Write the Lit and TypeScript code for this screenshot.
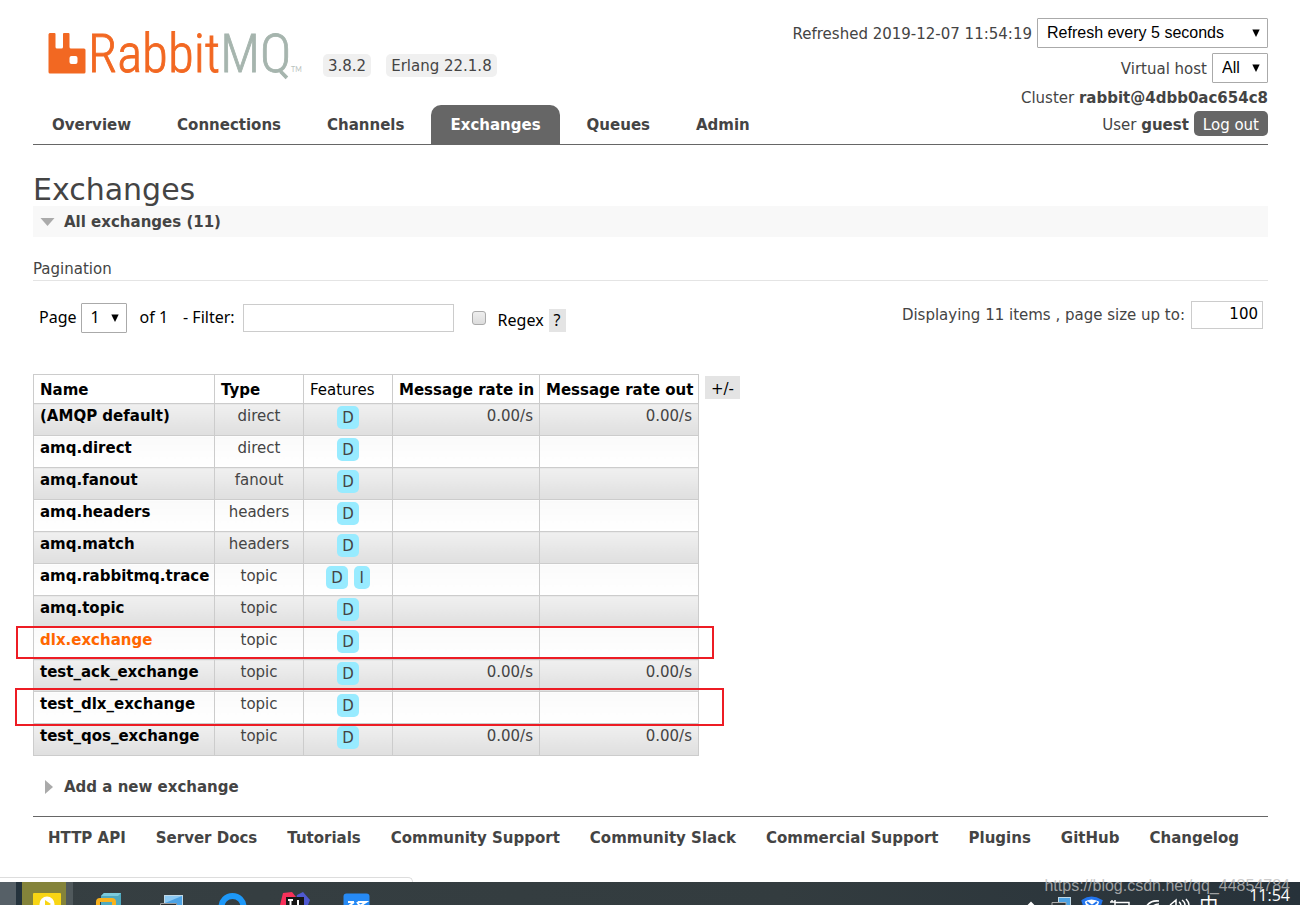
import { LitElement, html, css } from "lit";
import { customElement, property } from "lit/decorators.js";

interface Exchange {
  name: string;
  type: string;
  features: string[];
  rate?: string;
  hot?: boolean;
}

const exchanges: Exchange[] = [
  { name: "(AMQP default)", type: "direct", features: ["D"], rate: "0.00/s" },
  { name: "amq.direct", type: "direct", features: ["D"] },
  { name: "amq.fanout", type: "fanout", features: ["D"] },
  { name: "amq.headers", type: "headers", features: ["D"] },
  { name: "amq.match", type: "headers", features: ["D"] },
  { name: "amq.rabbitmq.trace", type: "topic", features: ["D", "I"] },
  { name: "amq.topic", type: "topic", features: ["D"] },
  { name: "dlx.exchange", type: "topic", features: ["D"], hot: true },
  { name: "test_ack_exchange", type: "topic", features: ["D"], rate: "0.00/s" },
  { name: "test_dlx_exchange", type: "topic", features: ["D"] },
  { name: "test_qos_exchange", type: "topic", features: ["D"], rate: "0.00/s" },
];

const tabs = ["Overview", "Connections", "Channels", "Exchanges", "Queues", "Admin"];

const footerLinks = [
  "HTTP API",
  "Server Docs",
  "Tutorials",
  "Community Support",
  "Community Slack",
  "Commercial Support",
  "Plugins",
  "GitHub",
  "Changelog",
];

const reset = css`
  * {
    box-sizing: border-box;
  }
  a {
    color: inherit;
    text-decoration: none;
  }
  button {
    font: inherit;
    border: 0;
    margin: 0;
    cursor: pointer;
  }
  .select {
    display: inline-flex;
    position: relative;
  }
  .select select {
    appearance: none;
    height: 30px;
    margin: 0;
    padding: 0 36px 2px 9px;
    border: 1px solid #aaa;
    border-radius: 1px;
    background: #fff;
    color: #000;
    font: 16px "Liberation Sans", Arial, sans-serif;
  }
  .select svg {
    position: absolute;
    right: 8px;
    top: 11px;
    pointer-events: none;
  }
`;

const arrow = html`<svg width="8" height="8" viewBox="0 0 8 8" aria-hidden="true">
  <path d="M0.3 0.5H7.7L4 8Z" fill="#000" />
</svg>`;

@customElement("app-header")
class AppHeader extends LitElement {
  static styles = [
    reset,
    css`
      :host {
        display: block;
      }
      .header {
        display: flex;
        justify-content: space-between;
        border-bottom: 1px solid #666;
      }
      .left {
        display: flex;
        flex-direction: column;
        justify-content: space-between;
      }
      .brand {
        display: flex;
        align-items: flex-end;
        padding: 23px 0 0 14px;
      }
      .logo {
        display: block;
        margin-right: 19px;
      }
      .logo svg {
        display: block;
        overflow: visible;
      }
      .version {
        height: 23px;
        padding: 0 5px;
        margin-right: 15px;
        border-radius: 5px;
        background: #f0f0f0;
        line-height: 25px;
      }
      .tabs {
        display: flex;
        gap: 8px;
        margin: 0;
        padding: 0;
        list-style: none;
        font-weight: bold;
      }
      .tab {
        display: block;
        height: 39px;
        padding: 0 19px;
        border-radius: 10px 10px 0 0;
        line-height: 40px;
      }
      .tab.on {
        background: #666;
        color: #fff;
      }
      .status {
        display: flex;
        flex-direction: column;
        align-items: flex-end;
        margin: 0;
        padding: 18px 0 8px;
        list-style: none;
        white-space: nowrap;
      }
      .row {
        display: flex;
        align-items: center;
        gap: 5px;
        height: 30px;
        margin-bottom: 5px;
      }
      .row label {
        padding-top: 2px;
      }
      .line {
        display: flex;
        align-items: center;
        gap: 5px;
        height: 18px;
        margin-bottom: 5px;
        line-height: 20px;
      }
      .line > span {
        padding-top: 2px;
      }
      .user {
        height: 25px;
        margin: 0;
      }
      .wide select {
        width: 231px;
      }
      .small select {
        width: 56px;
        padding-right: 20px;
      }
      .logout {
        height: 25px;
        padding: 2px 9px 0;
        border-radius: 5px;
        background: #666;
        color: #fff;
      }
    `,
  ];

  render() {
    return html`
      <header class="header">
        <div class="left">
          <div class="brand">
            <a href="#" class="logo" aria-label="RabbitMQ home">
              <svg width="257" height="54" viewBox="0 0 257 54">
                <path
                  fill="#f26822"
                  fill-rule="evenodd"
                  d="M2 10h5.500q1 0 1 1v13q0 1.500 1.500 1.500h4.500q1.500 0 1.500-1.500v-13q0-1 1-1h4.500q1 0 1 1v13q0 1.500 1.500 1.500h13q1.500 0 1.500 1.500v22q0 1.500-1.500 1.500h-34q-1.500 0-1.500-1.500v-37.500q0-1 1-1zM24.500 33q-2 0-2 2v4q0 2 2 2h4q2 0 2-2v-4q0-2-2-2z"
                />
                <text
                  x="41"
                  y="49"
                  font-family="'Liberation Sans Narrow', 'Roboto Condensed', Roboto, sans-serif"
                  font-size="53"
                  font-weight="300"
                  fill="#f26822"
                  stroke="#f26822"
                  stroke-width="0.8"
                >Rabbit<tspan fill="#a6b5ae" stroke="#a6b5ae">MQ</tspan></text>
                <text x="244" y="49" font-family="Lato, sans-serif" font-size="7" fill="#b8c2bd">TM</text>
              </svg>
            </a>
            <span class="version">3.8.2</span>
            <span class="version">Erlang 22.1.8</span>
          </div>
          <nav>
            <ul class="tabs">
              ${tabs.map(
                (t) => html`<li><a href="#" class="tab ${t === "Exchanges" ? "on" : ""}">${t}</a></li>`
              )}
            </ul>
          </nav>
        </div>
        <ul class="status">
          <li class="row">
            <label for="refresh">Refreshed 2019-12-07 11:54:19</label>
            <span class="select wide"><select id="refresh"><option>Refresh every 5 seconds</option></select>${arrow}</span>
          </li>
          <li class="row">
            <label for="vhost">Virtual host</label>
            <span class="select small"><select id="vhost"><option>All</option></select>${arrow}</span>
          </li>
          <li class="line"><span>Cluster <b>rabbit@4dbb0ac654c8</b></span></li>
          <li class="line user"><span>User <b>guest</b></span> <button class="logout">Log out</button></li>
        </ul>
      </header>
    `;
  }
}

@customElement("exchange-table")
class ExchangeTable extends LitElement {
  @property({ attribute: false }) rows: Exchange[] = [];

  static styles = [
    reset,
    css`
      :host {
        display: block;
      }
      .wrap {
        position: relative;
        display: flex;
        align-items: flex-start;
        gap: 6px;
      }
      .table {
        width: 666px;
        table-layout: fixed;
        border-collapse: collapse;
        line-height: 18px;
      }
      .c1 { width: 181px; }
      .c2 { width: 89px; }
      .c3 { width: 89px; }
      .c4 { width: 147px; }
      .c5 { width: 159px; }
      th,
      td {
        border: 1px solid #ccc;
        padding: 3px 6px;
        vertical-align: top;
        white-space: nowrap;
      }
      th {
        height: 29px;
        padding: 6px 6px 4px;
        text-align: left;
        color: #000;
      }
      th.plain {
        font-weight: normal;
      }
      td {
        height: 32px;
        text-align: center;
        background: linear-gradient(#fafafa, #fff);
      }
      tr:nth-child(odd) td {
        background: linear-gradient(#f0f0f0, #dfdfdf);
      }
      td.name {
        text-align: left;
        font-weight: bold;
        color: #000;
      }
      td.name.hot {
        color: #ff6600;
      }
      td.rate {
        text-align: right;
      }
      td.features {
        padding: 2px 0 0;
      }
      .chips {
        display: flex;
        justify-content: center;
        gap: 6px;
      }
      .chip {
        min-width: 16px;
        height: 23px;
        padding: 0 5px;
        border-radius: 5px;
        background: #98ebff;
        line-height: 24px;
      }
      .columns {
        height: 23px;
        margin-top: 2px;
        padding: 2px 6px 0;
        background: #e4e4e4;
        color: #000;
      }
      .mark {
        position: absolute;
        border: 2px solid #ed1c24;
        pointer-events: none;
      }
      .mark.first {
        left: -17px;
        top: 252px;
        width: 698px;
        height: 33px;
      }
      .mark.second {
        left: -18px;
        top: 314px;
        width: 709px;
        height: 38px;
      }
    `,
  ];

  render() {
    return html`
      <div class="wrap">
        <table class="table">
          <colgroup>
            <col class="c1" /><col class="c2" /><col class="c3" /><col class="c4" /><col class="c5" />
          </colgroup>
          <thead>
            <tr>
              <th>Name</th>
              <th>Type</th>
              <th class="plain">Features</th>
              <th>Message rate in</th>
              <th>Message rate out</th>
            </tr>
          </thead>
          <tbody>
            ${this.rows.map(
              (r) => html`<tr>
                <td class="name ${r.hot ? "hot" : ""}"><a href="#">${r.name}</a></td>
                <td>${r.type}</td>
                <td class="features">
                  <div class="chips">${r.features.map((f) => html`<span class="chip">${f}</span>`)}</div>
                </td>
                <td class="rate">${r.rate ?? ""}</td>
                <td class="rate">${r.rate ?? ""}</td>
              </tr>`
            )}
          </tbody>
        </table>
        <button class="columns">+/-</button>
        <div class="mark first"></div>
        <div class="mark second"></div>
      </div>
    `;
  }
}

@customElement("task-bar")
class TaskBar extends LitElement {
  static styles = css`
    :host {
      display: block;
    }
    .hint {
      width: 412px;
      height: 4px;
      border: 1px solid #ddd;
      border-width: 1px 1px 0 0;
      border-radius: 0 5px 0 0;
    }
    .bar {
      position: relative;
      display: flex;
      justify-content: space-between;
      height: 23px;
      background: linear-gradient(90deg, #363f42, #333c3f 60%, #27323a);
    }
    svg {
      display: block;
    }
    .clip {
      display: flex;
      overflow: hidden;
    }
    .ime,
    .clock {
      color: #fff;
      font: 16px/27px "Open Sans", "Noto Sans CJK SC", sans-serif;
    }
    .ime {
      width: 50px;
      font: 19px/44px "Noto Sans CJK SC", sans-serif;
    }
    .clock {
      padding-right: 10px;
    }
    .watermark {
      position: absolute;
      right: 10px;
      top: -5px;
      color: rgba(190, 190, 190, 0.8);
      font: 16px/18px "Liberation Sans", Arial, sans-serif;
    }
  `;

  render() {
    return html`
      <div class="hint"></div>
      <div class="bar">
        <svg width="400" height="23" viewBox="0 0 400 23" aria-hidden="true">
          <path fill="#566067" d="M0 0h16v23H0z" />
          <path fill="#25333d" d="M16 0h6v23h-6z" />
          <path fill="#84833a" d="M22 0h44v23H22z" />
          <path fill="#50595c" d="M66 0h7v23h-7z" />
          <rect x="33" y="11" width="28" height="20" rx="1" fill="#f8d514" />
          <circle cx="47" cy="22" r="7.500" fill="#fff" />
          <path d="M45 18l6 4-6 4z" fill="#f8d514" />
          <path d="M101 14l3-3h17v12h-20z" fill="#4fa9bf" />
          <path d="M104 11h17l-3 3h-17z" fill="#7ccbdc" />
          <path d="M98 27v-7q0-2 2-2h12q2 0 2 2v7" fill="none" stroke="#f9b21c" stroke-width="4" />
          <rect x="164.500" y="13.500" width="18" height="14" fill="#4da3e5" stroke="#c0d8e6" />
          <path fill="#8dcaf4" d="M165 14h17l-17 7z" />
          <path fill="#2b2f32" stroke="#999" d="M160.500 21.500h16v6h-16z" />
          <circle cx="232.500" cy="25" r="11" fill="none" stroke="#1d98f8" stroke-width="6" />
          <path fill="#f8315a" d="M283 11l9-1 4 5-5 8h-11z" />
          <path fill="#4f59d1" d="M297 13l6-3 7 8-2 5h-13z" />
          <path fill="#171717" d="M286 15h18v8h-18z" />
          <path d="M288 18h5m-2.500 0v5M298 18v5" stroke="#fff" stroke-width="2" />
          <rect x="343.500" y="11.500" width="26" height="18" rx="3" fill="#268af5" />
          <path d="M348 20h6m0 0l-5 4M358 20h8l-6 4m-3-4l3 4" fill="none" stroke="#fff" stroke-width="2" />
        </svg>
        <div class="clip">
          <svg width="173" height="23" viewBox="0 0 173 23" aria-hidden="true">
            <path d="M1 25l4-4 4 4" fill="none" stroke="#fff" stroke-width="2" />
            <rect x="32.500" y="15.500" width="12" height="9" fill="#4da3e5" stroke="#c0d8e6" />
            <path d="M26 20.500h14v4h-14z" fill="#30373b" stroke="#aaa" />
            <path d="M57 19q8-6 18 0l-2 6h-14z" fill="#fff" stroke="#2275ee" stroke-width="3" />
            <path d="M61 20l5 4 5-4" fill="none" stroke="#2275ee" stroke-width="2" />
            <path d="M89 25v-4.500h14v4M84 20h5M86 18v2m3-2v2" fill="none" stroke="#fff" stroke-width="1.500" />
            <path d="M120 25q4-7 13-6M126 25q3-3 7-3" fill="none" stroke="#fff" stroke-width="1.500" />
            <path d="M144 23l6-5v5M153 20q2 1 2 4M156 18q3 2 3 5M160 17q3 3 3 6" fill="none" stroke="#fff" stroke-width="1.500" />
          </svg>
          <span class="ime">中</span>
          <span class="clock">11:54</span>
        </div>
        <span class="watermark">https://blog.csdn.net/qq_44854784</span>
      </div>
    `;
  }
}

@customElement("app-root")
class AppRoot extends LitElement {
  static styles = [
    reset,
    css`
      :host {
        display: flex;
        flex-direction: column;
        min-height: 100vh;
        overflow-x: hidden;
        background: #fff;
        color: #444;
        font: 15px/18px "DejaVu Sans", Verdana, sans-serif;
      }
      .page {
        padding: 0 32px 0 33px;
      }
      .title {
        margin: 28px 0 0;
        font-size: 30px;
        font-weight: normal;
        line-height: 33px;
      }
      .section {
        display: flex;
        align-items: center;
        margin: 0;
        height: 31px;
        padding-left: 7px;
        gap: 9px;
        background: #f8f8f8;
        font-size: 15px;
      }
      .section.closed {
        margin-top: 15px;
        background: none;
      }
      .sub {
        margin: 23px 0 22px;
        padding-bottom: 2px;
        border-bottom: 1px solid #e4e4e4;
        font-size: 15px;
        font-weight: normal;
        line-height: 18px;
      }
      .filter {
        display: flex;
        align-items: center;
        height: 30px;
        margin-bottom: 41px;
        padding: 0 5px 0 6px;
        white-space: nowrap;
      }
      .controls {
        display: flex;
        align-items: center;
        flex: 1;
        color: #000;
        font: 16px/18px "Noto Sans", sans-serif;
      }
      .cap {
        padding-bottom: 2px;
      }
      .page-select {
        margin: 0 13px 0 4px;
      }
      .page-select select {
        width: 46px;
        padding-right: 20px;
        font: 16px "Noto Sans", sans-serif;
      }
      .text {
        height: 28px;
        border: 1px solid #ccc;
        background: #fff;
        color: #000;
        font: 15px "DejaVu Sans", Verdana, sans-serif;
      }
      .query {
        width: 211px;
        margin: 0 18px 0 8px;
      }
      .dash {
        margin-left: 15px;
      }
      .check {
        appearance: none;
        width: 14px;
        height: 14px;
        margin: 0 12px 0 0;
        border: 1px solid #aaa;
        border-radius: 3px;
        background: linear-gradient(#eee, #dcdcdc);
      }
      .regex {
        display: flex;
        align-items: center;
        gap: 5px;
        padding-top: 4px;
      }
      .help {
        height: 23px;
        padding: 0 5px;
        background: #e4e4e4;
        color: #000;
      }
      .sizes {
        display: flex;
        align-items: center;
        gap: 6px;
        padding-bottom: 6px;
      }
      .size {
        width: 72px;
        padding: 0 4px 2px;
        text-align: right;
      }
      .footer {
        display: flex;
        flex-wrap: wrap;
        gap: 0 30px;
        margin-top: 14px;
        padding: 12px 0 18px 15px;
        border-top: 1px solid #666;
        font-weight: bold;
        white-space: nowrap;
      }
      .tasks {
        margin-top: auto;
      }
    `,
  ];

  render() {
    return html`
      <div class="page">
        <app-header></app-header>
        <main>
          <h1 class="title">Exchanges</h1>
          <h2 class="section">
            <svg width="15" height="8" viewBox="0 0 15 8" aria-hidden="true"><path d="M0.500 0h14L7.500 8z" fill="#aaa" /></svg>
            All exchanges (11)
          </h2>
          <h3 class="sub">Pagination</h3>
          <div class="filter">
            <div class="controls">
              <label class="cap" for="page">Page</label>
              <span class="select page-select"><select id="page"><option>1</option></select>${arrow}</span>
              <span class="cap">of 1</span>
              <label class="cap dash" for="query">- Filter:</label>
              <input class="text query" id="query" type="text" />
              <input class="check" id="regex" type="checkbox" />
              <span class="regex"><label for="regex">Regex</label><button class="help">?</button></span>
            </div>
            <div class="sizes">
              <label for="size">Displaying 11 items , page size up to:</label>
              <input class="text size" id="size" type="text" value="100" />
            </div>
          </div>
          <exchange-table .rows=${exchanges}></exchange-table>
          <h2 class="section closed">
            <svg width="15" height="14" viewBox="0 0 15 14" aria-hidden="true"><path d="M5 0v14l8-7z" fill="#aaa" /></svg>
            Add a new exchange
          </h2>
        </main>
        <footer class="footer">${footerLinks.map((l) => html`<a href="#">${l}</a>`)}</footer>
      </div>
      <task-bar class="tasks"></task-bar>
    `;
  }
}
